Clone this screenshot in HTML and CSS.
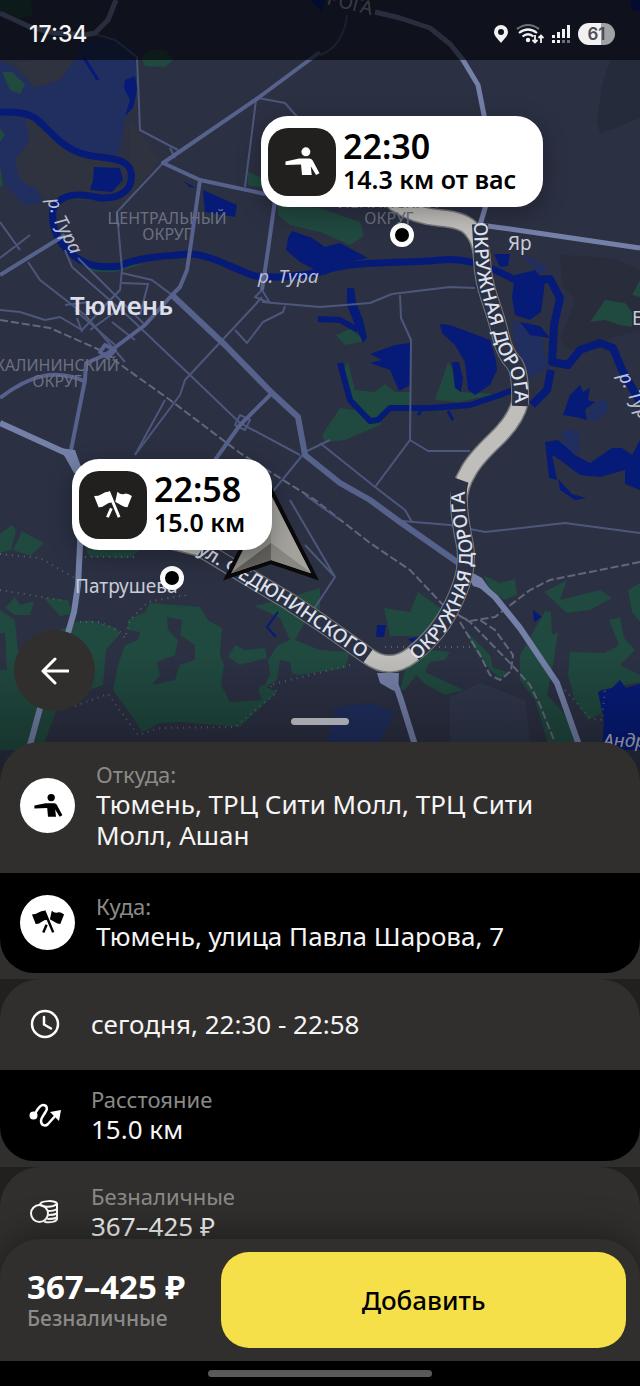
FILE: index.html
```html
<!DOCTYPE html>
<html lang="ru">
<head>
    <meta charset="UTF-8">
    <meta name="viewport" content="width=device-width, initial-scale=1.0">
    <title>Заказ</title>
    <link rel="stylesheet" href="styles.css">
</head>
<body>
    <!-- shared icons -->
    <svg class="sprite" aria-hidden="true">
        <symbol id="icon-person" viewBox="-2 -2 40 35">
            <circle cx="22" cy="5" r="4.600"/>
            <path d="M1 15 15 12H26Q28 12.500 29 14L36 27 32.500 29 27 20 28 29H18L17 18 1 18.500Z"/>
        </symbol>
        <symbol id="icon-flags" viewBox="0 0 36 28">
            <path d="M1 6Q5 6 8 4T14 2L17.500 11.500Q14 11.500 11 14T5 16Z"/>
            <path d="M22 2Q25 5 28 4T35 6L31 16Q28 16 25 14T20 11Z"/>
            <path d="M14 2 23.500 25" fill="none" stroke="currentColor" stroke-width="2.600"/>
            <path d="M16.500 17 13 25" fill="none" stroke="currentColor" stroke-width="2.600"/>
        </symbol>
    </svg>

    <section class="map">
        <svg class="map-canvas" viewBox="0 0 640 780" preserveAspectRatio="xMidYMin slice">
            <defs>
                <path id="ring-north" d="M474 222Q474 242 476 262T484 302 494 337 507 366 515 412"/>
                <path id="ring-south" d="M417 661 435 644Q450 628 460 607T472 566 468 525 467 470"/>
                <path id="fedyuninskogo" d="M197 553 245 582 287 607 320 630 376 668"/>
                <path id="tura-west" d="M47 200 54 222 80 272"/>
                <path id="tura-east" d="M618 376 655 450"/>
                <path id="route" d="M395 203Q415 216 440 218T472 230Q481 240 482 260T490 300 501 337 513 362 520 402Q516 420 495 440T468 472Q458 488 459 505T465 545Q468 565 461 585T443 622 412 655Q390 672 368 656L323 624 290 602 248 577 200 548 168 540"/>
            </defs>
            <rect width="640" height="780" fill="#2b3043"/>

            <!-- districts -->
            <g fill="#2f3340">
                <path d="M0 150 30 115 60 140 120 160 90 200 50 200 20 180ZM15 62 75 60 60 80 35 88Z"/>
                <path d="M130 120 160 160 120 210 100 200 130 180Z"/>
            </g>
            <path fill="#262b3c" d="M610 60H640V118L600 134 597 120 602 85Z"/>
            <path fill="#282c3b" d="M560 255 612 258 640 270V330L570 350 560 340 575 300 562 285Z"/>
            <path fill="#30374c" d="M450 697 480 683 525 700 530 742H450Z"/>

            <!-- floodplain -->
            <g fill="#202f60">
                <path d="M0 110V60L15 68 35 88 60 80 75 60 80 42 110 38 135 50 137 75 125 120 118 155 80 152 50 130 25 112Z"/>
                <path d="M0 116 25 118 30 140 15 160 20 180 40 192 40 203 25 205 5 185 0 165Z"/>
                <path d="M512 320 540 330 548 368 530 378 515 345Z"/>
                <path d="M562 431 578 430 580 452 565 453ZM592 405 605 398 609 410 598 420 586 420Z"/>
                <path d="M335 708 370 703 395 712 380 742H328Z"/>
                <path d="M520 252 548 268 540 275Z"/>
            </g>

            <!-- parks -->
            <g fill="#20493f">
                <path d="M0 0H31L32 15 20 18 0 10ZM141 58 150 50 165 50 173 60 165 67 145 66ZM2 72H12L25 84 20 94 10 90Z"/>
                <path d="M0 128 5 135 0 142ZM0 165 3 185 0 187ZM248 172 262 178V188L248 185Z"/>
                <path d="M277 205 320 208 360 222 364 236 350 245 320 232 290 225 278 215Z"/>
                <path d="M85 268 145 264 115 272 95 272Z"/>
                <path d="M336 335 350 329 366 341 345 345Z"/>
                <path d="M322 435 340 408 355 410 344 370 348 362 355 390 375 392 385 384 395 392 410 392V405L385 412 380 425 345 440 325 442Z"/>
                <path d="M448 362 453 370 460 392 495 394 460 402 435 400Z"/>
                <path d="M590 322 605 300 625 303 632 312V327L620 325 605 320ZM632 295 640 280V297Z"/>
                <path d="M0 534 12 525 16 530 11 550 0 553ZM22 531 44 543 30 556 13 550ZM85 548 140 550 130 558 90 557Z"/>
                <path d="M5 608 15 597 20 605 34 601 30 615 15 615ZM44 598 68 600 72 614 60 616Z"/>
                <path d="M0 610 15 620 18 652 75 622 90 620 116 628 120 634 106 650 103 685 60 700 42 750H0Z"/>
                <path d="M128 630V620L145 612 150 603 200 607 208 620 222 628 220 655 224 665 221 685 230 702 262 700 258 690 262 685 277 692 240 727 180 722 160 723 142 732 136 722 113 690 118 665 125 645 138 640 140 632Z"/>
                <path d="M228 657 235 645 245 650 265 648 267 658 240 665ZM254 606 280 600 320 588V612L330 625 305 622 295 640 320 650 350 652 345 668 300 675 292 674 290 662 280 660 277 680 262 690 270 675 268 660 278 645 290 640 280 618Z"/>
                <path d="M384 608 410 612 418 592 440 608 450 615 430 636H390Z"/>
                <path d="M400 690 405 670 430 650 450 652 445 660 430 662 425 672 464 690 445 695 425 684 416 675 405 690Z"/>
                <path d="M483 575 500 583 515 579 517 595 504 600 490 590Z"/>
                <path d="M544 592 567 580 560 600 600 590 612 598 590 610 567 613Z"/>
                <path d="M520 655 545 611 551 612 552 635 558 632 553 665 547 695 575 725 580 750H550L535 700 520 680Z"/>
                <path d="M570 652 605 653 619 645 609 620 620 617 624 638 635 650 620 665 640 675V682L600 690 602 713 588 720 575 700 568 675Z"/>
                <path d="M628 590 640 583V622L632 612ZM463 628 490 655 493 668 508 672 500 678 490 670 475 650Z"/>
            </g>
            <g fill="#2b3043">
                <path d="M167 617 182 620 180 635 195 645V660L180 665 175 680 152 685 160 675 157 662 175 655 178 640 168 630Z"/>
                <path d="M0 633H5L7 670H0Z"/>
            </g>

            <!-- water -->
            <g fill="#061b78">
                <path d="M125 80 135 76 137 90 133 108 125 116 130 100 124 88ZM94 167 120 168 123 180 112 192 90 190 93 180Z"/>
                <path d="M203 190 237 205 235 217 205 212ZM182 180 196 188 190 187ZM310 0 325 0 322 12ZM630 0H640V12L632 10Z"/>
                <path d="M288 238 292 231 312 238 325 247 340 243 368 258 345 263 325 275 300 262 286 250Z"/>
                <path d="M347 288H354L356 302 363 320 367 338 363 343 355 325 347 305Z"/>
                <path d="M370 354 395 345 410 343V385L399 391 390 370 370 363 382 360Z"/>
                <path d="M440 324 450 325 490 340 496 360 497 370 490 385 475 395 468 390 465 362 455 345 442 333ZM452 362 459 362 463 378 461 392 455 388Z"/>
                <path d="M494 254 510 254 508 266 500 267Z"/>
                <path d="M515 275 535 270 545 282 541 312 530 320 515 315 512 297Z"/>
                <path d="M520 322 540 326 550 338 530 335Z"/>
                <path d="M563 415 570 395 580 385 583 392 590 388 588 400 595 402 585 410 587 420 575 417Z"/>
                <path d="M545 442 558 440 575 455 590 463 612 448 622 448 632 455 640 440V490L625 484 625 470 600 477 580 475 560 460 552 455 557 480 549 478Z"/>
                <path d="M558 479 572 494 586 498 575 500 560 490Z"/>
                <path d="M598 692 612 688 620 680 626 688 640 684V750H602L604 720Z"/>
                <path d="M533 610 542 617 534 622ZM377 625H386L384 637H376ZM408 639 418 637 415 645Z"/>
            </g>
            <g fill="none" stroke="#061b78" stroke-linejoin="round">
                <path stroke-width="7" d="M0 112C15 112 25 112 35 118 50 130 60 146 80 153 100 160 128 155 131 172 134 190 120 199 100 198 80 193 60 192 53 210 50 235 65 250 80 260 90 266 105 268 120 266 135 258 160 256 190 254 210 254 235 270 255 276 285 279 300 275 320 272 350 260 400 264 440 260 465 257 490 266 515 280"/>
                <path stroke-width="8" d="M515 281 550 279 560 298 554 325 552 362 568 365 580 350 600 343 613 348 622 370 640 402M551 370 547 390 532 405"/>
                <path stroke-width="6" d="M340 363 350 400 370 421 378 420 390 408 430 408 470 405 500 395 518 388M318 319 340 320 358 330"/>
                <path stroke-width="3" d="M84 58 98 80M423 408 418 415M448 411 453 420"/>
                <path stroke-width="2" d="M278 612 267 627 276 637"/>
            </g>

            <!-- railways and borders -->
            <g fill="none" stroke="#62687c" stroke-width="2" stroke-dasharray="8 3">
                <path d="M0 320 50 328 100 350 170 400 240 453 315 500 370 543 410 570 445 607 470 622 512 665 530 685 540 705 556 745"/>
                <path d="M640 562 550 580 530 590 495 617 470 621 455 614M460 622 480 655 490 675 500 680 511 671 513 655 495 630 480 620"/>
            </g>
            <g fill="none" stroke="#59606b" stroke-width="2" stroke-dasharray="1 5">
                <path d="M0 554 40 558 75 578M0 590 60 600M85 557 135 557M80 622 100 622 120 632 125 638 130 620 148 602 185 595 188 600"/>
                <path d="M75 706 108 694 138 735 160 728 235 727 277 692 270 685 350 665M385 647H470M565 690 590 718 602 720 605 690"/>
            </g>

            <!-- streets -->
            <g fill="none" stroke="#4d577b" stroke-width="2" stroke-linejoin="round">
                <path d="M95 34 115 40 137 57 140 130 178 150M258 98 285 103 300 120M256 100 245 187M163 163 117 212 122 270 120 290 100 310M170 148 175 158"/>
                <path d="M0 222 20 250M0 258 30 235M28 262 40 280 85 315 125 362M0 310 20 312 45 320 60 317 82 330 120 290M65 250 72 267 130 318 190 375 240 423 300 455"/>
                <path d="M78 258 145 325M122 273 152 280 172 295M122 283 148 284 140 315M105 285 125 305 90 330M65 305 90 302M77 318 82 332M75 310 115 345M112 322 135 340"/>
                <path d="M262 297 255 305 185 380 180 395 135 455M262 302 320 307 370 303 392 294 450 287 475 288M235 330 247 343 263 322 283 312 285 306M255 297 262 290 270 303Z"/>
                <path d="M400 295 401 318 411 340 410 440 375 487M410 440 428 451 470 451M320 443 375 487 405 510 412 522M402 521 450 525 485 532 565 523 640 533"/>
                <path d="M305 452 270 495M305 452 330 440M290 500 335 577 308 618M305 545 335 577M305 495 340 520M347 15C345 35 335 50 320 55"/>
                <path d="M135 455 165 400M240 415 250 420 245 430 235 425Z"/>
            </g>
            <g fill="none" stroke="#56618c" stroke-width="4" stroke-linejoin="round">
                <path d="M320 52 258 98 163 163 200 180 265 194M200 180 190 250 187 270 180 287 172 295 145 325 105 355 86 363 85 380 71 450M0 275 65 235M0 398C30 375 55 368 86 382"/>
                <path d="M275 200 268 250 262 290M272 393 240 425 215 460M105 345 115 350 108 358 100 352Z"/>
            </g>
            <path fill="none" stroke="#56618c" stroke-width="6" stroke-linejoin="round" d="M172 295 225 345 272 393 298 417 305 455 340 483 370 500 400 522 460 564"/>
            <path fill="none" stroke="#7480a8" stroke-width="5" stroke-linejoin="round" d="M0 13 30 27 55 33 85 35 95 33 108 20 116 0M375 12 400 18 430 28 450 44 463 60 478 85 485 120 486 205 480 225 510 229 640 248"/>
            <path fill="none" stroke="#7480a8" stroke-width="6" stroke-linejoin="round" d="M0 423 66 453 80 470V545L78 585 74 612 66 640 45 690 30 745M460 564 475 580 495 597 520 628 557 683 579 745M392 675 400 697 415 745"/>
            <path fill="#7480a8" d="M60 448 75 450 84 475 74 473ZM464 568 482 578 492 592 473 586ZM377 673H399L398 692 392 690 380 683Z"/>

            <!-- route -->
            <g fill="none" stroke-linecap="round" stroke-linejoin="round">
                <use href="#route" stroke="#77787a" stroke-width="18"/>
                <use href="#route" stroke="#bfbeba" stroke-width="15"/>
            </g>
            <!-- label plates on the route -->
            <g fill="none" stroke="#2b3043" stroke-width="16" stroke-linejoin="round">
                <path d="M480 224Q481 240 482 260T490 300 501 337 513 362 520 406M461 480Q458 488 459 505T465 545Q468 565 461 585T443 622 414 654M368 656 323 624 290 602 248 577 202 549"/>
            </g>

            <!-- labels -->
            <g class="district">
                <text x="167" y="224">ЦЕНТРАЛЬНЫЙ</text>
                <text x="167" y="240">ОКРУГ</text>
                <text x="57" y="371">КАЛИНИНСКИЙ</text>
                <text x="57" y="387">ОКРУГ</text>
                <text x="389" y="208">ЛЕНИНСКИЙ</text>
                <text x="389" y="224">ОКРУГ</text>
            </g>
            <g class="road">
                <text><textPath href="#ring-north">ОКРУЖНАЯ ДОРОГА</textPath></text>
                <text><textPath href="#ring-south">ОКРУЖНАЯ ДОРОГА</textPath></text>
                <text><textPath href="#fedyuninskogo">ул. ФЕДЮНИНСКОГО</textPath></text>
            </g>
            <text class="road-name" transform="translate(326 4) rotate(14)">РОГА</text>
            <g class="river">
                <text><textPath href="#tura-west">р. Тура</textPath></text>
                <text x="258" y="283">р. Тура</text>
                <text><textPath href="#tura-east">р. Тура</textPath></text>
            </g>
            <text class="city" x="70" y="315">Тюмень</text>
            <g class="town">
                <text x="75" y="593">Патрушева</text>
                <text x="508" y="250">Яр</text>
                <text x="632" y="325">Ембаево</text>
            </g>
            <text class="lake" x="603" y="747">Андреевское</text>

            <!-- driver position -->
            <path fill="#8f8e89" stroke="#0a0a0a" stroke-width="4" d="M271 490 315 577 271 562 227 577Z"/>
            <path fill="#a3a29d" d="M271 496V543L311 573Z"/>
            <path fill="#62615e" d="M271 543V560L231 573Z"/>
            <path fill="#888782" d="M271 543 311 573 271 560Z"/>

            <g fill="#000" stroke="#fff" stroke-width="5">
                <circle cx="402" cy="235" r="9.500"/>
                <circle cx="172" cy="578" r="9.500"/>
            </g>
        </svg>

        <header class="status-bar">
            <span class="status-time">17:34</span>
            <svg class="status-pin" viewBox="0 0 16 20"><path fill="#f1f1f3" fill-rule="evenodd" d="M8 1a7 7 0 0 1 7 7c0 4-4 7-7 11C5 15 1 12 1 8a7 7 0 0 1 7-7Zm0 4a3 3 0 1 0 0 6 3 3 0 0 0 0-6Z"/></svg>
            <svg class="status-wifi" viewBox="0 0 28 22" fill="none" stroke-width="2.200">
                <path stroke="#6d7079" d="M1 6Q12-2 23 6"/>
                <path stroke="#f1f1f3" d="M3 10Q12 3 21 10M6.500 13.500Q12 9 17.500 13.500"/>
                <circle cx="12" cy="17" r="2.200" fill="#f1f1f3"/>
                <path stroke="#f1f1f3" stroke-width="1.800" d="M19 12V19M16.500 17 19 19.500 21.500 17M25 20V12.500M22.500 15 25 12.500 27.500 15"/>
            </svg>
            <svg class="status-signal" viewBox="0 0 20 20">
                <path fill="#f1f1f3" d="M1 11h3v3H1zM6 8h3v6H6zM11 5h3v9h-3zM16 1h3v13h-3zM1 16h3v3H1zM6 16h3v3H6z"/>
                <path fill="#6d7079" d="M11 16h3v3h-3zM16 16h3v3h-3z"/>
            </svg>
            <span class="battery">61</span>
        </header>

        <div class="pin pin-from">
            <span class="pin-icon"><svg><use href="#icon-person"/></svg></span>
            <div>
                <div class="pin-time">22:30</div>
                <div class="pin-distance">14.3 км от вас</div>
            </div>
        </div>
        <div class="pin pin-to">
            <span class="pin-icon"><svg><use href="#icon-flags"/></svg></span>
            <div>
                <div class="pin-time">22:58</div>
                <div class="pin-distance">15.0 км</div>
            </div>
        </div>

        <button class="back" type="button" aria-label="Назад">
            <svg viewBox="0 0 28 28"><path d="M27 14H2M14 2 2 14 14 26"/></svg>
        </button>
        <div class="grabber"></div>
    </section>

    <main class="sheet">
        <div class="card">
            <div class="row">
                <span class="point"><svg><use href="#icon-person"/></svg></span>
                <div>
                    <div class="label">Откуда:</div>
                    <div class="value">Тюмень, ТРЦ Сити Молл, ТРЦ Сити Молл, Ашан</div>
                </div>
            </div>
            <div class="row row-dark">
                <span class="point"><svg><use href="#icon-flags"/></svg></span>
                <div>
                    <div class="label">Куда:</div>
                    <div class="value">Тюмень, улица Павла Шарова, 7</div>
                </div>
            </div>
        </div>

        <div class="card">
            <div class="row row-detail">
                <svg class="icon" viewBox="0 0 30 30"><circle cx="15" cy="15" r="13"/><path d="M14 8V15.500L21 19.500"/></svg>
                <div class="value">сегодня, 22:30 - 22:58</div>
            </div>
            <div class="row row-detail row-dark">
                <svg class="icon" viewBox="0 0 30 30"><circle class="solid" cx="3.500" cy="15.500" r="4"/><path d="M4 15C7 11 9 5 13 5 17 5 18 9 15.500 12 13 16 11 18 11 21 11 25 15 27 18 24L26 15"/><path class="solid" d="M20 12 31 10 29 21Z"/></svg>
                <div>
                    <div class="label">Расстояние</div>
                    <div class="value">15.0 км</div>
                </div>
            </div>
        </div>

        <div class="card">
            <div class="row row-detail">
                <svg class="icon icon-coins" viewBox="0 0 30 30"><circle cx="9.500" cy="16.500" r="8.500"/><path d="M10 8C10 3 27 3 27 7V22C27 24 22 26 15 25M10 8C13 10 22 11 27 7M18 14Q24 14 27 12M19 18Q24 18 27 16.500M18 22Q24 22 27 20.500"/></svg>
                <div>
                    <div class="label">Безналичные</div>
                    <div class="value">367–425 ₽</div>
                </div>
            </div>
        </div>
    </main>

    <footer class="checkout">
        <div>
            <div class="price">367–425 ₽</div>
            <div class="price-label">Безналичные</div>
        </div>
        <button class="add" type="button">Добавить</button>
    </footer>
    <div class="nav-bar"></div>
</body>
</html>
```
FILE: styles.css
```css
* {
    box-sizing: border-box;
}

body {
    margin: 0;
    height: 100vh;
    display: flex;
    flex-direction: column;
    overflow: hidden;
    background: #21201f;
    color: #f5f5f5;
    font-family: 'Noto Sans', 'Open Sans', sans-serif;
}

button {
    border: 0;
    padding: 0;
    font-family: inherit;
    cursor: pointer;
}

.sprite {
    position: absolute;
    width: 0;
    height: 0;
}

/* map */
.map {
    position: relative;
    flex: none;
    height: 56vh;
    overflow: hidden;
    background: #2b3043;
}

.map::after {
    content: '';
    position: absolute;
    left: 0;
    right: 0;
    bottom: 0;
    height: 120px;
    background: linear-gradient(transparent, rgba(0, 0, 0, 0.35));
    pointer-events: none;
}

.map-canvas {
    position: absolute;
    inset: 0;
    width: 100%;
    height: 100%;
}

.district {
    font-size: 16px;
    fill: #6c7080;
    text-anchor: middle;
}

.road {
    font-size: 19px;
    font-weight: 500;
    fill: #dfe2ee;
}

.road-name {
    font-size: 19px;
    fill: #a4a7b1;
}

.river {
    font-size: 19px;
    font-style: italic;
    fill: #b9bed2;
}

.city {
    font-size: 26px;
    font-weight: 600;
    fill: #dcdeea;
}

.town {
    font-size: 19px;
    fill: #c9ccd8;
}

.lake {
    font-size: 19px;
    font-style: italic;
    fill: #aeb2c4;
}

/* status bar */
.status-bar {
    position: relative;
    display: flex;
    align-items: center;
    gap: 7px;
    height: 60px;
    padding: 8px 25px 0 29px;
    background: rgba(2, 3, 8, 0.66);
}

.status-time {
    margin-right: auto;
    font-family: Inter, sans-serif;
    font-size: 23px;
    font-weight: 500;
}

.status-pin {
    width: 16px;
    height: 20px;
}

.status-wifi {
    width: 28px;
    height: 22px;
}

.status-signal {
    width: 20px;
    height: 20px;
}

.battery {
    width: 37px;
    border-radius: 11px;
    background: linear-gradient(90deg, #f1f1f3 61%, #a0a1a5 61%);
    color: #4c4d52;
    font-family: Inter, sans-serif;
    font-size: 17px;
    font-weight: 600;
    line-height: 22px;
    text-align: center;
}

/* pins */
.pin {
    position: absolute;
    display: flex;
    align-items: center;
    gap: 7px;
    height: 91px;
    padding: 0 27px 0 7px;
    border-radius: 27px;
    background: #fff;
    color: #000;
    font-weight: 600;
    white-space: nowrap;
    box-shadow: 0 6px 24px rgba(0, 0, 0, 0.3);
}

.pin-from {
    top: 116px;
    left: 261px;
}

.pin-to {
    top: 459px;
    left: 72px;
}

.pin-icon {
    display: flex;
    align-items: center;
    justify-content: center;
    width: 68px;
    height: 68px;
    border-radius: 20px;
    background: #21201f;
    color: #fff;
}

.pin-icon svg {
    width: 40px;
    height: 34px;
    fill: currentColor;
}

.pin-time {
    font-size: 34px;
    line-height: 34px;
}

.pin-distance {
    font-size: 25px;
    line-height: 32px;
}

.back {
    position: absolute;
    bottom: 65px;
    left: 14px;
    display: flex;
    align-items: center;
    justify-content: center;
    width: 81px;
    height: 81px;
    border-radius: 50%;
    background: #302f2d;
    z-index: 1;
}

.back svg {
    width: 28px;
    height: 28px;
    fill: none;
    stroke: #fff;
    stroke-width: 3;
    stroke-linecap: round;
    stroke-linejoin: round;
}

.grabber {
    position: absolute;
    bottom: 51px;
    left: 50%;
    width: 58px;
    height: 7px;
    margin-left: -29px;
    border-radius: 4px;
    background: #a6a8ad;
    z-index: 1;
}

/* bottom sheet */
.sheet {
    position: relative;
    flex: 1;
    min-height: 0;
    margin-top: -34px;
    overflow: hidden;
}

.card {
    padding-bottom: 6px;
    border-radius: 40px 40px 0 0;
    background: #302f2d;
}

.card:last-child {
    min-height: 120px;
}

.row {
    display: flex;
    align-items: center;
    gap: 21px;
    padding: 18px 80px 22px 20px;
}

.row-dark {
    padding-top: 19px;
    padding-bottom: 21px;
    border-radius: 0 0 34px 34px;
    background: #000;
}

.row-detail {
    gap: 31px;
    min-height: 91px;
    padding: 14px 30px 15px 30px;
}

.point {
    display: flex;
    flex: none;
    align-items: center;
    justify-content: center;
    width: 55px;
    height: 55px;
    border-radius: 50%;
    background: #fff;
    color: #000;
}

.point svg {
    width: 34px;
    height: 28px;
    fill: currentColor;
}

.icon {
    flex: none;
    width: 30px;
    height: 30px;
    fill: none;
    stroke: #fff;
    stroke-width: 2.5;
    stroke-linecap: round;
    stroke-linejoin: round;
    overflow: visible;
}

.icon .solid {
    fill: #fff;
    stroke: none;
}

.icon-coins {
    stroke-width: 2;
}

.label {
    color: #8b8a88;
    font-size: 22px;
    line-height: 29px;
}

.value {
    font-size: 26px;
    line-height: 31px;
}

/* footer */
.checkout {
    position: relative;
    display: grid;
    grid-template-columns: auto 1fr;
    align-items: center;
    gap: 36px;
    margin-top: -40px;
    padding: 13px 14px 13px 27px;
    border-radius: 40px 40px 0 0;
    background: #302f2d;
    box-shadow: 0 0 40px rgba(0, 0, 0, 0.45);
}

.price {
    color: #fff;
    font-size: 33px;
    font-weight: 700;
    line-height: 36px;
}

.price-label {
    color: #8b8a88;
    font-size: 21px;
    font-weight: 500;
    line-height: 26px;
}

.add {
    height: 96px;
    border-radius: 28px;
    background: #f5e04a;
    color: #000;
    font-size: 26px;
    font-weight: 500;
}

.nav-bar {
    flex: none;
    display: flex;
    align-items: center;
    justify-content: center;
    height: 25px;
    background: #000;
}

.nav-bar::before {
    content: '';
    width: 35%;
    height: 7px;
    border-radius: 4px;
    background: #656565;
}
```
